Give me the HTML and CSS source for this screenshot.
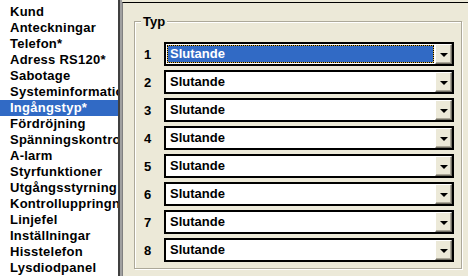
FILE: index.html
```html
<!DOCTYPE html>
<html>
<head>
<meta charset="utf-8">
<link rel="stylesheet" href="styles.css">
</head>
<body>
<div class="app">
  <ul class="list">
    <li>Kund</li>
    <li>Anteckningar</li>
    <li>Telefon*</li>
    <li>Adress RS120*</li>
    <li>Sabotage</li>
    <li>Systeminformation</li>
    <li class="active">Ingångstyp*</li>
    <li>Fördröjning</li>
    <li>Spänningskontroll</li>
    <li>A-larm</li>
    <li>Styrfunktioner</li>
    <li>Utgångsstyrning</li>
    <li>Kontrolluppringning</li>
    <li>Linjefel</li>
    <li>Inställningar</li>
    <li>Hisstelefon</li>
    <li>Lysdiodpanel</li>
  </ul>
  <div class="splitter"></div>
  <div class="pane">
    <div class="group">
      <span class="legend">Typ</span>
      <div class="rows">
        <div class="row"><span class="num">1</span><div class="combo"><div class="field"><div class="sel"><span class="val">Slutande</span></div></div><div class="btn"><i class="arrow"></i></div></div></div>
        <div class="row"><span class="num">2</span><div class="combo"><div class="field"><span class="val">Slutande</span></div><div class="btn"><i class="arrow"></i></div></div></div>
        <div class="row"><span class="num">3</span><div class="combo"><div class="field"><span class="val">Slutande</span></div><div class="btn"><i class="arrow"></i></div></div></div>
        <div class="row"><span class="num">4</span><div class="combo"><div class="field"><span class="val">Slutande</span></div><div class="btn"><i class="arrow"></i></div></div></div>
        <div class="row"><span class="num">5</span><div class="combo"><div class="field"><span class="val">Slutande</span></div><div class="btn"><i class="arrow"></i></div></div></div>
        <div class="row"><span class="num">6</span><div class="combo"><div class="field"><span class="val">Slutande</span></div><div class="btn"><i class="arrow"></i></div></div></div>
        <div class="row"><span class="num">7</span><div class="combo"><div class="field"><span class="val">Slutande</span></div><div class="btn"><i class="arrow"></i></div></div></div>
        <div class="row"><span class="num">8</span><div class="combo"><div class="field"><span class="val">Slutande</span></div><div class="btn"><i class="arrow"></i></div></div></div>
      </div>
    </div>
  </div>
</div>
</body>
</html>
```

FILE: styles.css
```css
html, body {
  margin: 0;
  padding: 0;
  background: #ECE9D8;
  font-family: "Liberation Sans", Arial, sans-serif;
  font-weight: bold;
  font-size: 13px;
  color: #000;
}
.app {
  display: flex;
  width: 468px;
  height: 276px;
  overflow: hidden;
}
.list {
  list-style: none;
  margin: 0;
  padding: 4px 0 0 0;
  width: 118px;
  flex: none;
  background: #fff;
  border-right: 2px solid #404040;
  overflow: hidden;
}
.list li {
  height: 16px;
  line-height: 16px;
  padding-left: 10px;
  letter-spacing: 0.25px;
  white-space: nowrap;
}
.list li.active {
  background: #316AC5;
  color: #fff;
}
.splitter {
  width: 2px;
  flex: none;
  background: #A0A0A0;
}
.pane {
  flex: 1;
  margin-top: 2px;
  border-top: 1px solid #000;
  border-left: 1px solid #808080;
  padding: 18px 5px 6px 11px;
  display: flex;
}
.group {
  position: relative;
  flex: 1;
  border: 1px solid #ACA899;
  box-shadow: inset 1px 1px 0 #fff, 1px 1px 0 #fff;
  margin-right: 1px;
  margin-bottom: 1px;
  padding: 20px 0 0 9px;
}
.legend {
  position: absolute;
  top: -8px;
  left: 6px;
  padding: 0 2px;
  line-height: 16px;
  background: #ECE9D8;
}
.rows {
  display: flex;
  flex-direction: column;
  gap: 4px;
}
.row {
  display: flex;
  align-items: center;
  height: 24px;
}
.num {
  width: 20px;
  flex: none;
}
.combo {
  display: flex;
  width: 286px;
  height: 20px;
  border: 2px solid #000;
  background: #fff;
}
.field {
  flex: 1;
  padding: 1px;
  display: flex;
}
.val {
  line-height: 18px;
  padding-left: 3px;
}
.sel {
  flex: 1;
  display: flex;
  border: 1px dotted #000;
  background: #D8B040;
}
.sel .val {
  flex: 1;
  background: #316AC5;
  color: #fff;
  line-height: 16px;
  padding-left: 2px;
}
.btn {
  width: 15px;
  height: 18px;
  flex: none;
  background: #ECE9D8;
  border-top: 1px solid #fff;
  border-left: 1px solid #fff;
  border-right: 1px solid #716F64;
  border-bottom: 1px solid #716F64;
  box-shadow: inset -1px -1px 0 #ACA899;
  display: flex;
  align-items: center;
  justify-content: center;
}
.arrow {
  width: 0;
  height: 0;
  border-left: 4px solid transparent;
  border-right: 4px solid transparent;
  border-top: 4px solid #000;
  margin-top: 1px;
}
```
